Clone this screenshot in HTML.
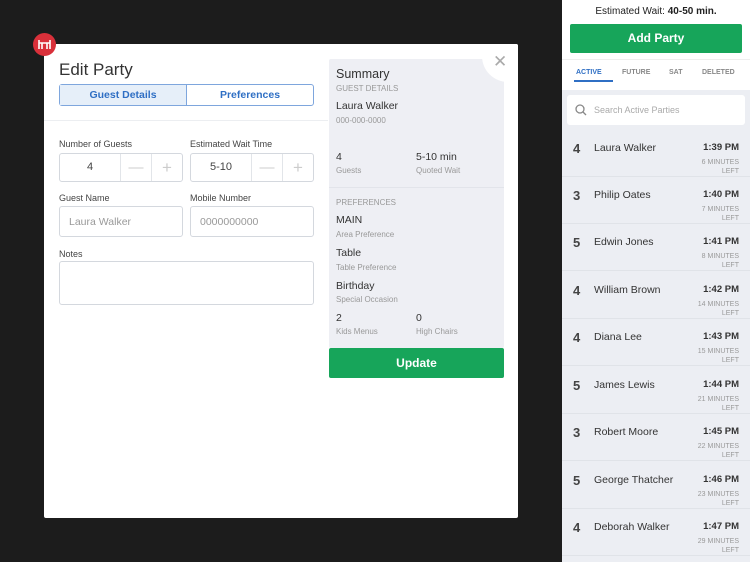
<!DOCTYPE html><html><head><style>
*{box-sizing:border-box;margin:0;padding:0}
body{width:750px;height:562px;background:#1c1c1c;font-family:"Liberation Sans",sans-serif;position:relative;overflow:hidden;color:#333}
.abs{position:absolute}
.modal{left:44px;top:44px;width:474px;height:474px;background:#fff;border-radius:2px;overflow:hidden}
.lbl{font-size:9px;color:#444}
.box{border:1px solid #d4d8de;border-radius:3px;background:#fff}
.sm{font-size:8px;color:#999}
.sv{font-size:10.5px;color:#333}
.right{left:562px;top:0;width:188px;height:562px;background:#eceef3}
.row{position:absolute;left:0;width:188px;height:47px;border-bottom:1px solid #e0e3e8;background:#eceef3}
.row .n{position:absolute;left:11px;top:11px;font-size:13px;font-weight:bold;color:#444}
.row .nm{position:absolute;left:32px;top:12px;font-size:10.5px;color:#333}
.row .t{position:absolute;right:11px;top:12px;font-size:9.5px;font-weight:bold;color:#333}
.row .m{position:absolute;right:11px;top:28px;font-size:7px;color:#999;text-align:right;line-height:9px}
</style></head><body>
<div class="abs modal">
 <div class="abs" style="left:15px;top:16px;font-size:17px;color:#333">Edit Party</div>
 <div class="abs" style="left:15px;top:40px;width:255px;height:22px;border:1px solid #7ea6dd;border-radius:3px;display:flex;font-size:10.5px;color:#2f6fc4;font-weight:bold">
  <div style="width:127px;background:#e6eff9;border-right:1px solid #7ea6dd;text-align:center;line-height:20px">Guest Details</div>
  <div style="flex:1;text-align:center;line-height:20px">Preferences</div>
 </div>
 <div class="abs" style="left:0;top:76px;width:284px;height:1px;background:#eceef1"></div>
 <div class="abs lbl" style="left:15px;top:95px">Number of Guests</div>
 <div class="abs lbl" style="left:146px;top:95px">Estimated Wait Time</div>
 <div class="abs box" style="left:15px;top:109px;width:124px;height:29px;display:flex;font-size:11px;color:#444">
  <div style="width:61px;text-align:center;line-height:27px;border-right:1px solid #e2e5e9">4</div><div style="width:31px;text-align:center;line-height:27px;border-right:1px solid #e2e5e9;color:#ccc;font-size:15px">—</div><div style="flex:1;text-align:center;line-height:27px;color:#ccc;font-size:17px">+</div></div>
 <div class="abs box" style="left:146px;top:109px;width:124px;height:29px;display:flex;font-size:11px;color:#444">
  <div style="width:61px;text-align:center;line-height:27px;border-right:1px solid #e2e5e9">5-10</div><div style="width:31px;text-align:center;line-height:27px;border-right:1px solid #e2e5e9;color:#ccc;font-size:15px">—</div><div style="flex:1;text-align:center;line-height:27px;color:#ccc;font-size:17px">+</div></div>
 <div class="abs lbl" style="left:15px;top:149px">Guest Name</div>
 <div class="abs lbl" style="left:146px;top:149px">Mobile Number</div>
 <div class="abs box" style="left:15px;top:162px;width:124px;height:31px;font-size:10.5px;color:#999;padding:9px 9px">Laura Walker</div>
 <div class="abs box" style="left:146px;top:162px;width:124px;height:31px;font-size:10.5px;color:#999;padding:9px 9px">0000000000</div>
 <div class="abs lbl" style="left:15px;top:205px">Notes</div>
 <div class="abs box" style="left:15px;top:217px;width:255px;height:44px"></div>
 <div class="abs" style="left:285px;top:15px;width:175px;height:289px;background:#eeeff4;border-radius:2px">
  <div class="abs" style="left:7px;top:8px;font-size:12.5px;color:#333">Summary</div>
  <div class="abs sm" style="left:7px;top:25px">GUEST DETAILS</div>
  <div class="abs sv" style="left:7px;top:41px">Laura Walker</div>
  <div class="abs sm" style="left:7px;top:57px">000-000-0000</div>
  <div class="abs sv" style="left:7px;top:92px">4</div>
  <div class="abs sm" style="left:7px;top:107px">Guests</div>
  <div class="abs sv" style="left:87px;top:92px">5-10 min</div>
  <div class="abs sm" style="left:87px;top:107px">Quoted Wait</div>
  <div class="abs" style="left:0;top:128px;width:175px;height:1px;background:#e2e4ea"></div>
  <div class="abs sm" style="left:7px;top:139px">PREFERENCES</div>
  <div class="abs sv" style="left:7px;top:155px">MAIN</div>
  <div class="abs sm" style="left:7px;top:171px">Area Preference</div>
  <div class="abs sv" style="left:7px;top:188px">Table</div>
  <div class="abs sm" style="left:7px;top:204px">Table Preference</div>
  <div class="abs sv" style="left:7px;top:221px">Birthday</div>
  <div class="abs sm" style="left:7px;top:236px">Special Occasion</div>
  <div class="abs sv" style="left:7px;top:253px">2</div>
  <div class="abs sm" style="left:7px;top:268px">Kids Menus</div>
  <div class="abs sv" style="left:87px;top:253px">0</div>
  <div class="abs sm" style="left:87px;top:268px">High Chairs</div>
 </div>
 <div class="abs" style="left:438px;top:-14px;width:52px;height:52px;background:#fff;border-radius:50%"></div>
 <div class="abs" style="left:449px;top:8px;font-size:17px;color:#aaa">✕</div>
 <div class="abs" style="left:285px;top:304px;width:175px;height:30px;background:#17a55a;color:#fff;font-size:12px;font-weight:bold;text-align:center;line-height:30px;border-radius:2px">Update</div>
</div>
<div class="abs" style="left:33px;top:33px;width:23px;height:23px;border-radius:50%;background:#d9303a">
 <svg class="abs" style="left:5px;top:6px" width="13" height="11" viewBox="0 0 13 11"><path d="M1 1v9M12 1v9M1 4h11M4 4v6M9 4v6" stroke="#fff" stroke-width="1.6" fill="none"/></svg>
</div>
<div class="abs right">
 <div class="abs" style="left:0;top:0;width:188px;height:90px;background:#fff"></div>
 <div class="abs" style="left:0;top:6px;width:188px;text-align:center;font-size:10px;color:#222">Estimated Wait: <b>40-50 min.</b></div>
 <div class="abs" style="left:8px;top:24px;width:172px;height:29px;background:#17a55a;border-radius:2px;color:#fff;font-size:12px;font-weight:bold;text-align:center;line-height:29px">Add Party</div>
 <div class="abs" style="left:0;top:59px;width:188px;height:1px;background:#eee"></div>
 <div class="abs" style="left:14px;top:69px;font-size:7px;font-weight:bold;color:#2f6fc4">ACTIVE</div>
 <div class="abs" style="left:12px;top:80px;width:39px;height:2px;background:#2f6fc4"></div>
 <div class="abs" style="left:60px;top:69px;font-size:7px;font-weight:bold;color:#888">FUTURE</div>
 <div class="abs" style="left:107px;top:69px;font-size:7px;font-weight:bold;color:#888">SAT</div>
 <div class="abs" style="left:140px;top:69px;font-size:7px;font-weight:bold;color:#888">DELETED</div>
 <div class="abs" style="left:5px;top:95px;width:178px;height:30px;background:#fff;border-radius:3px">
  <svg class="abs" style="left:8px;top:9px" width="12" height="12"><circle cx="5" cy="5" r="4" fill="none" stroke="#888" stroke-width="1.3"/><line x1="8" y1="8" x2="11" y2="11" stroke="#888" stroke-width="1.3"/></svg>
  <div class="abs" style="left:27px;top:10px;font-size:9px;color:#aaa">Search Active Parties</div>
 </div>
 <div class="row" style="top:130px"><span class="n">4</span><span class="nm">Laura Walker</span><span class="t">1:39 PM</span><span class="m">6 MINUTES<br>LEFT</span></div>
 <div class="row" style="top:177px"><span class="n">3</span><span class="nm">Philip Oates</span><span class="t">1:40 PM</span><span class="m">7 MINUTES<br>LEFT</span></div>
 <div class="row" style="top:224px"><span class="n">5</span><span class="nm">Edwin Jones</span><span class="t">1:41 PM</span><span class="m">8 MINUTES<br>LEFT</span></div>
 <div class="row" style="top:272px"><span class="n">4</span><span class="nm">William Brown</span><span class="t">1:42 PM</span><span class="m">14 MINUTES<br>LEFT</span></div>
 <div class="row" style="top:319px"><span class="n">4</span><span class="nm">Diana Lee</span><span class="t">1:43 PM</span><span class="m">15 MINUTES<br>LEFT</span></div>
 <div class="row" style="top:367px"><span class="n">5</span><span class="nm">James Lewis</span><span class="t">1:44 PM</span><span class="m">21 MINUTES<br>LEFT</span></div>
 <div class="row" style="top:414px"><span class="n">3</span><span class="nm">Robert Moore</span><span class="t">1:45 PM</span><span class="m">22 MINUTES<br>LEFT</span></div>
 <div class="row" style="top:462px"><span class="n">5</span><span class="nm">George Thatcher</span><span class="t">1:46 PM</span><span class="m">23 MINUTES<br>LEFT</span></div>
 <div class="row" style="top:509px"><span class="n">4</span><span class="nm">Deborah Walker</span><span class="t">1:47 PM</span><span class="m">29 MINUTES<br>LEFT</span></div>
</div>
</body></html>
